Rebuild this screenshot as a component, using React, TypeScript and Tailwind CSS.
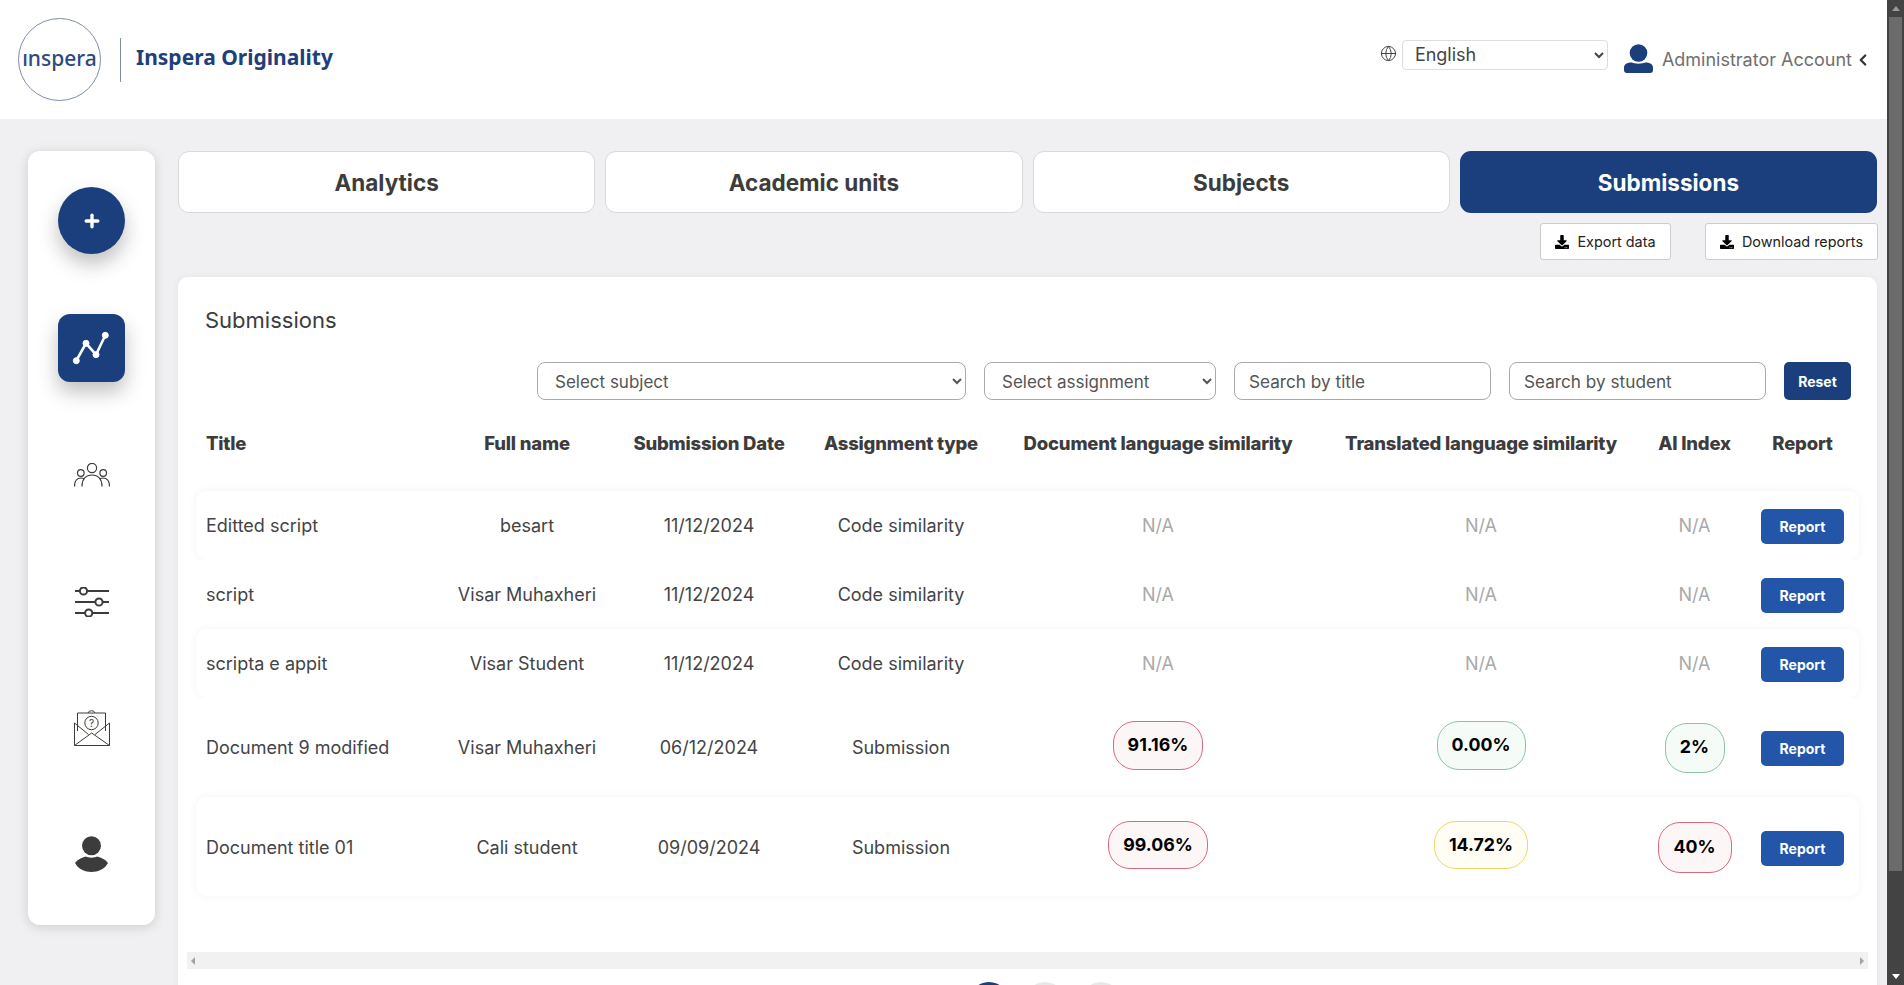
import { ChevronLeft, Globe, Plus } from "lucide-react";
import { FaDownload } from "react-icons/fa";

type Badge = { label: string; tone: "red" | "green" | "yellow"; size: string };

type Row = {
  title: string;
  name: string;
  date: string;
  type: string;
  doc?: Badge;
  translated?: Badge;
  ai?: Badge;
  shadow: boolean;
  height: string;
};

const tabs = ["Analytics", "Academic units", "Subjects", "Submissions"];

const rows: Row[] = [
  { title: "Editted script", name: "besart", date: "11/12/2024", type: "Code similarity", shadow: true, height: "h-[68px]" },
  { title: "script", name: "Visar Muhaxheri", date: "11/12/2024", type: "Code similarity", shadow: false, height: "h-[70px]" },
  { title: "scripta e appit", name: "Visar Student", date: "11/12/2024", type: "Code similarity", shadow: true, height: "h-[68px]" },
  {
    title: "Document 9 modified",
    name: "Visar Muhaxheri",
    date: "06/12/2024",
    type: "Submission",
    doc: { label: "91.16%", tone: "red", size: "w-[90px] h-[49px] mb-[4px]" },
    translated: { label: "0.00%", tone: "green", size: "w-[89px] h-[49px] mb-[4px]" },
    ai: { label: "2%", tone: "green", size: "w-[60px] h-[50px]" },
    shadow: false,
    height: "h-[100px]",
  },
  {
    title: "Document title 01",
    name: "Cali student",
    date: "09/09/2024",
    type: "Submission",
    doc: { label: "99.06%", tone: "red", size: "w-[100px] h-[48px] mb-[4px]" },
    translated: { label: "14.72%", tone: "yellow", size: "w-[94px] h-[48px] mb-[4px]" },
    ai: { label: "40%", tone: "red", size: "w-[74px] h-[51px]" },
    shadow: true,
    height: "h-[99px]",
  },
];

const tones = {
  red: "border-[#d9697f] bg-[#fdf6f7]",
  green: "border-[#8cc4a6] bg-[#f5fbf7]",
  yellow: "border-[#f0d66a] bg-[#fffdf4]",
};

const gridCols = "grid grid-cols-[250px_162px_202px_182px_332px_314px_113px_103px] items-center";

function Score({ badge }: { badge?: Badge }) {
  if (!badge) return <span className="text-[#a9a9a9]">N/A</span>;
  return (
    <span
      className={`flex items-center justify-center rounded-[22px] border text-[17.8px] font-bold text-black ${tones[badge.tone]} ${badge.size}`}
    >
      {badge.label}
    </span>
  );
}

function UsersIcon() {
  return (
    <svg width="36" height="24" viewBox="0 0 36 24" fill="none" stroke="#3c3c3c" strokeWidth="1.2">
      <circle cx="18" cy="5" r="4.6" />
      <circle cx="6.8" cy="10" r="3.3" />
      <circle cx="29.2" cy="10" r="3.3" />
      <path d="M8 23.5C8 16 12 12 18 12s10 4 10 11.5" />
      <path d="M0.5 23.5C0.5 18 3 15 7 15c1.2 0 2.2.2 3 .7" />
      <path d="M35.5 23.5C35.5 18 33 15 29 15c-1.2 0-2.2.2-3 .7" />
    </svg>
  );
}

function SlidersIcon() {
  return (
    <svg width="34" height="30" viewBox="0 0 34 30" fill="none" stroke="#3c3c3c" strokeWidth="2">
      <path d="M0 4h34M0 15h34M0 26h34" />
      <circle cx="8.5" cy="4" r="3.6" fill="#fff" />
      <circle cx="24" cy="15" r="3.6" fill="#fff" />
      <circle cx="13.7" cy="26" r="3.6" fill="#fff" />
    </svg>
  );
}

function MailIcon() {
  return (
    <svg width="36" height="36" viewBox="0 0 36 36" fill="none" stroke="#3c3c3c" strokeWidth="1">
      <path d="M0.5 13V35.5H35.5V13" />
      <path d="M3.5 21V3H31.5V21" />
      <path d="M14 3a3.6 3 0 0 1 7 0" />
      <circle cx="17.5" cy="13" r="6.7" />
      <path d="M0.5 13L14.5 24.5M35.5 13L21 24.5M0.5 35.5L17.7 23L35.5 35.5" />
      <text x="17.5" y="16.5" textAnchor="middle" fontSize="10" fill="#3c3c3c" stroke="none" fontFamily="Inter, sans-serif">
        ?
      </text>
    </svg>
  );
}

function PersonIcon() {
  return (
    <svg width="33" height="36" viewBox="0 0 33 36" fill="#3c3c3c">
      <circle cx="16.5" cy="9.7" r="9.5" />
      <path d="M0 27C3 23 8 21 11 20.5C13 22 20 22 22 20.5C25 21 30 23 33 27C30 33 23 36 16.5 36C10 36 3 33 0 27Z" />
    </svg>
  );
}

function AccountIcon() {
  return (
    <svg width="29" height="29" viewBox="0 0 29 29" fill="#1a3f7c">
      <circle cx="14.5" cy="9" r="8.8" />
      <path d="M0 26V24C0 20 3 18.5 8 18.5C10 20 19 20 21 18.5C26 18.5 29 20 29 24V26C29 28 28 29 26 29H3C1 29 0 28 0 26Z" />
    </svg>
  );
}

export default function App() {
  return (
    <div className="flex h-[985px] w-[1904px] overflow-hidden bg-[#f0f0f2] font-['Inter',sans-serif] text-[#444]">
      <div className="flex min-w-0 flex-1 flex-col">
        <header className="flex h-[119px] shrink-0 items-center justify-between bg-white pl-[18px] pr-[15px]">
          <div className="flex items-center">
            <div className="flex h-[83px] w-[83px] items-center justify-center rounded-full border border-[#7f8ca8] pb-[2px] font-['Noto_Sans',sans-serif] text-[21px] font-medium text-[#2c4a7e]">
              ınspera
            </div>
            <div className="ml-[19px] mr-[15px] h-[44px] w-px bg-[#7f8ca8]" />
            <span className="mb-[3px] font-['Noto_Sans',sans-serif] text-[21px] font-bold text-[#1f3f7a]">Inspera Originality</span>
          </div>
          <div className="flex items-center">
            <Globe size={17} strokeWidth={1.4} className="mb-[13px] mr-[5px] text-[#444]" />
            <select className="mb-[10px] h-[30px] w-[206px] rounded-[4px] border border-[#ddd] bg-white pl-[8px] text-[18px] text-[#444]">
              <option>English</option>
            </select>
            <span className="mb-[2px] ml-[16px]">
              <AccountIcon />
            </span>
            <span className="ml-[9px] text-[18px] text-[#6f6f6f]">Administrator Account</span>
            <ChevronLeft size={18} strokeWidth={3} className="ml-[2px] text-[#333]" />
          </div>
        </header>

        <div className="flex min-h-0 flex-1 gap-[23px] pl-[28px] pr-[10px] pt-[32px]">
          <aside className="flex h-[774px] w-[127px] shrink-0 flex-col items-center gap-[60px] rounded-[12px] bg-white pt-[36px] shadow-[0_2px_12px_rgba(0,0,0,0.15)]">
            <div className="flex h-[67px] w-[67px] items-center justify-center rounded-full bg-[#1a3f7c] text-white shadow-[0_10px_20px_rgba(0,0,0,0.25)]">
              <Plus size={20} strokeWidth={4} />
            </div>
            <div className="h-[68px] w-[67px] rounded-[12px] bg-[#1a3f7c] shadow-[0_10px_20px_rgba(0,0,0,0.25)]">
              <svg width="67" height="68" viewBox="0 0 67 68" fill="#fff" stroke="#fff">
                <path d="M18.3 46.7L28 29.3L38 40.7L47.3 21.3" fill="none" strokeWidth="2.6" />
                <circle cx="18.3" cy="46.7" r="3" />
                <circle cx="28" cy="29.3" r="3" />
                <circle cx="38" cy="40.7" r="3" />
                <circle cx="47.3" cy="21.3" r="3" />
              </svg>
            </div>
            <div className="-mt-[1px] flex h-[67px] items-center pt-[1px]">
              <UsersIcon />
            </div>
            <div className="flex h-[67px] items-center">
              <SlidersIcon />
            </div>
            <div className="flex h-[67px] items-center pb-[2px]">
              <MailIcon />
            </div>
            <div className="flex h-[67px] items-center pb-[3px]">
              <PersonIcon />
            </div>
          </aside>

          <main className="min-w-0 flex-1">
            <div className="grid grid-cols-4 gap-[10px]">
              {tabs.map((tab) =>
                tab === "Submissions" ? (
                  <div key={tab} className="flex h-[62px] items-center justify-center rounded-[11px] bg-[#1a3f7c] pt-[2px] text-[22.5px] font-bold text-white">
                    {tab}
                  </div>
                ) : (
                  <div key={tab} className="flex h-[62px] items-center justify-center rounded-[11px] border border-[#d9d9d9] bg-white pt-[2px] text-[22.5px] font-bold text-[#3c3c3c]">
                    {tab}
                  </div>
                ),
              )}
            </div>

            <div className="-mr-[1px] mt-[10px] flex justify-end gap-[34px]">
              <button type="button" className="flex h-[37px] w-[131px] items-center justify-center gap-[8px] rounded-[3px] border border-[#ccc] bg-white text-[14.4px] text-[#222]">
                <FaDownload size={14} className="text-black" />
                Export data
              </button>
              <button type="button" className="flex h-[37px] w-[173px] items-center justify-center gap-[8px] rounded-[3px] border border-[#ccc] bg-white text-[14.4px] text-[#222]">
                <FaDownload size={14} className="text-black" />
                Download reports
              </button>
            </div>

            <section className="mt-[17px] rounded-[10px] bg-white px-[18px] pt-[29px] shadow-[0_0_8px_rgba(0,0,0,0.05)]">
              <h1 className="pl-[9px] text-[22px] leading-[28px] text-[#3c3c3c]">Submissions</h1>

              <div className="mt-[28px] flex justify-end gap-[18px] pr-[8px]">
                <select className="h-[38px] w-[429px] rounded-[8px] border border-[#aaa] bg-white pl-[13px] pt-[1px] text-[17px] text-[#555]">
                  <option>Select subject</option>
                </select>
                <select className="h-[38px] w-[232px] rounded-[8px] border border-[#aaa] bg-white pl-[13px] pt-[1px] text-[17px] text-[#555]">
                  <option>Select assignment</option>
                </select>
                <input placeholder="Search by title" className="h-[38px] w-[257px] rounded-[8px] border border-[#aaa] px-[14px] pt-[1px] text-[17.2px] placeholder:text-[#555]" />
                <input placeholder="Search by student" className="h-[38px] w-[257px] rounded-[8px] border border-[#aaa] px-[14px] pt-[1px] text-[17.2px] placeholder:text-[#555]" />
                <button type="button" className="h-[38px] w-[67px] rounded-[5px] bg-[#1a3f7c] text-[14px] font-bold text-white">
                  Reset
                </button>
              </div>

              <div className={`mt-[28px] h-[32px] text-center text-[18.5px] font-extrabold tracking-[-0.2px] text-[#3c3c3c] ${gridCols}`}>
                <span className="pl-[10px] text-left">Title</span>
                <span>Full name</span>
                <span>Submission Date</span>
                <span>Assignment type</span>
                <span>Document language similarity</span>
                <span>Translated language similarity</span>
                <span>AI Index</span>
                <span>Report</span>
              </div>

              <div className="mt-[31px] text-[18px] text-[#444]">
                {rows.map((row) => (
                  <div
                    key={row.title}
                    className={`rounded-[10px] bg-white pt-[1px] text-center ${gridCols} ${row.height} ${row.shadow ? "shadow-[0_0_10px_rgba(0,0,0,0.05)]" : ""}`}
                  >
                    <span className="pl-[10px] text-left">{row.title}</span>
                    <span>{row.name}</span>
                    <span>{row.date}</span>
                    <span>{row.type}</span>
                    <span className="flex justify-center">
                      <Score badge={row.doc} />
                    </span>
                    <span className="flex justify-center">
                      <Score badge={row.translated} />
                    </span>
                    <span className="flex justify-center">
                      <Score badge={row.ai} />
                    </span>
                    <span className="flex justify-center">
                      <button type="button" className="mt-[2px] h-[35px] w-[83px] rounded-[5px] bg-[#2355a8] text-[14px] font-bold text-white">
                        Report
                      </button>
                    </span>
                  </div>
                ))}
              </div>

              <div className="-mx-[9px] mt-[56px] flex h-[17px] items-center justify-between bg-[#f1f1f1] px-[4px]">
                <span className="h-0 w-0 border-y-[4px] border-r-[4px] border-y-transparent border-r-[#a3a3a3]" />
                <span className="h-0 w-0 border-y-[4px] border-l-[4px] border-y-transparent border-l-[#a3a3a3]" />
              </div>

              <div className="mt-[13px] flex justify-center gap-[16px] pb-[10px] pl-[34px]">
                <span className="h-[40px] w-[40px] rounded-full bg-[#1a3f7c]" />
                <span className="h-[40px] w-[40px] rounded-full bg-[#e8e8e8]" />
                <span className="h-[40px] w-[40px] rounded-full bg-[#e8e8e8]" />
              </div>
            </section>
          </main>
        </div>
      </div>

      <div className="flex w-[17px] shrink-0 flex-col items-center bg-[#434343]">
        <div className="flex h-[17px] items-center justify-center">
          <span className="h-0 w-0 border-x-[4px] border-b-[5px] border-x-transparent border-b-[#9a9a9a]" />
        </div>
        <div className="h-[854px] w-[13px] bg-[#6b6b6b]" />
        <div className="flex-1" />
        <div className="flex h-[17px] items-center justify-center">
          <span className="h-0 w-0 border-x-[4px] border-t-[5px] border-x-transparent border-t-white" />
        </div>
      </div>
    </div>
  );
}
